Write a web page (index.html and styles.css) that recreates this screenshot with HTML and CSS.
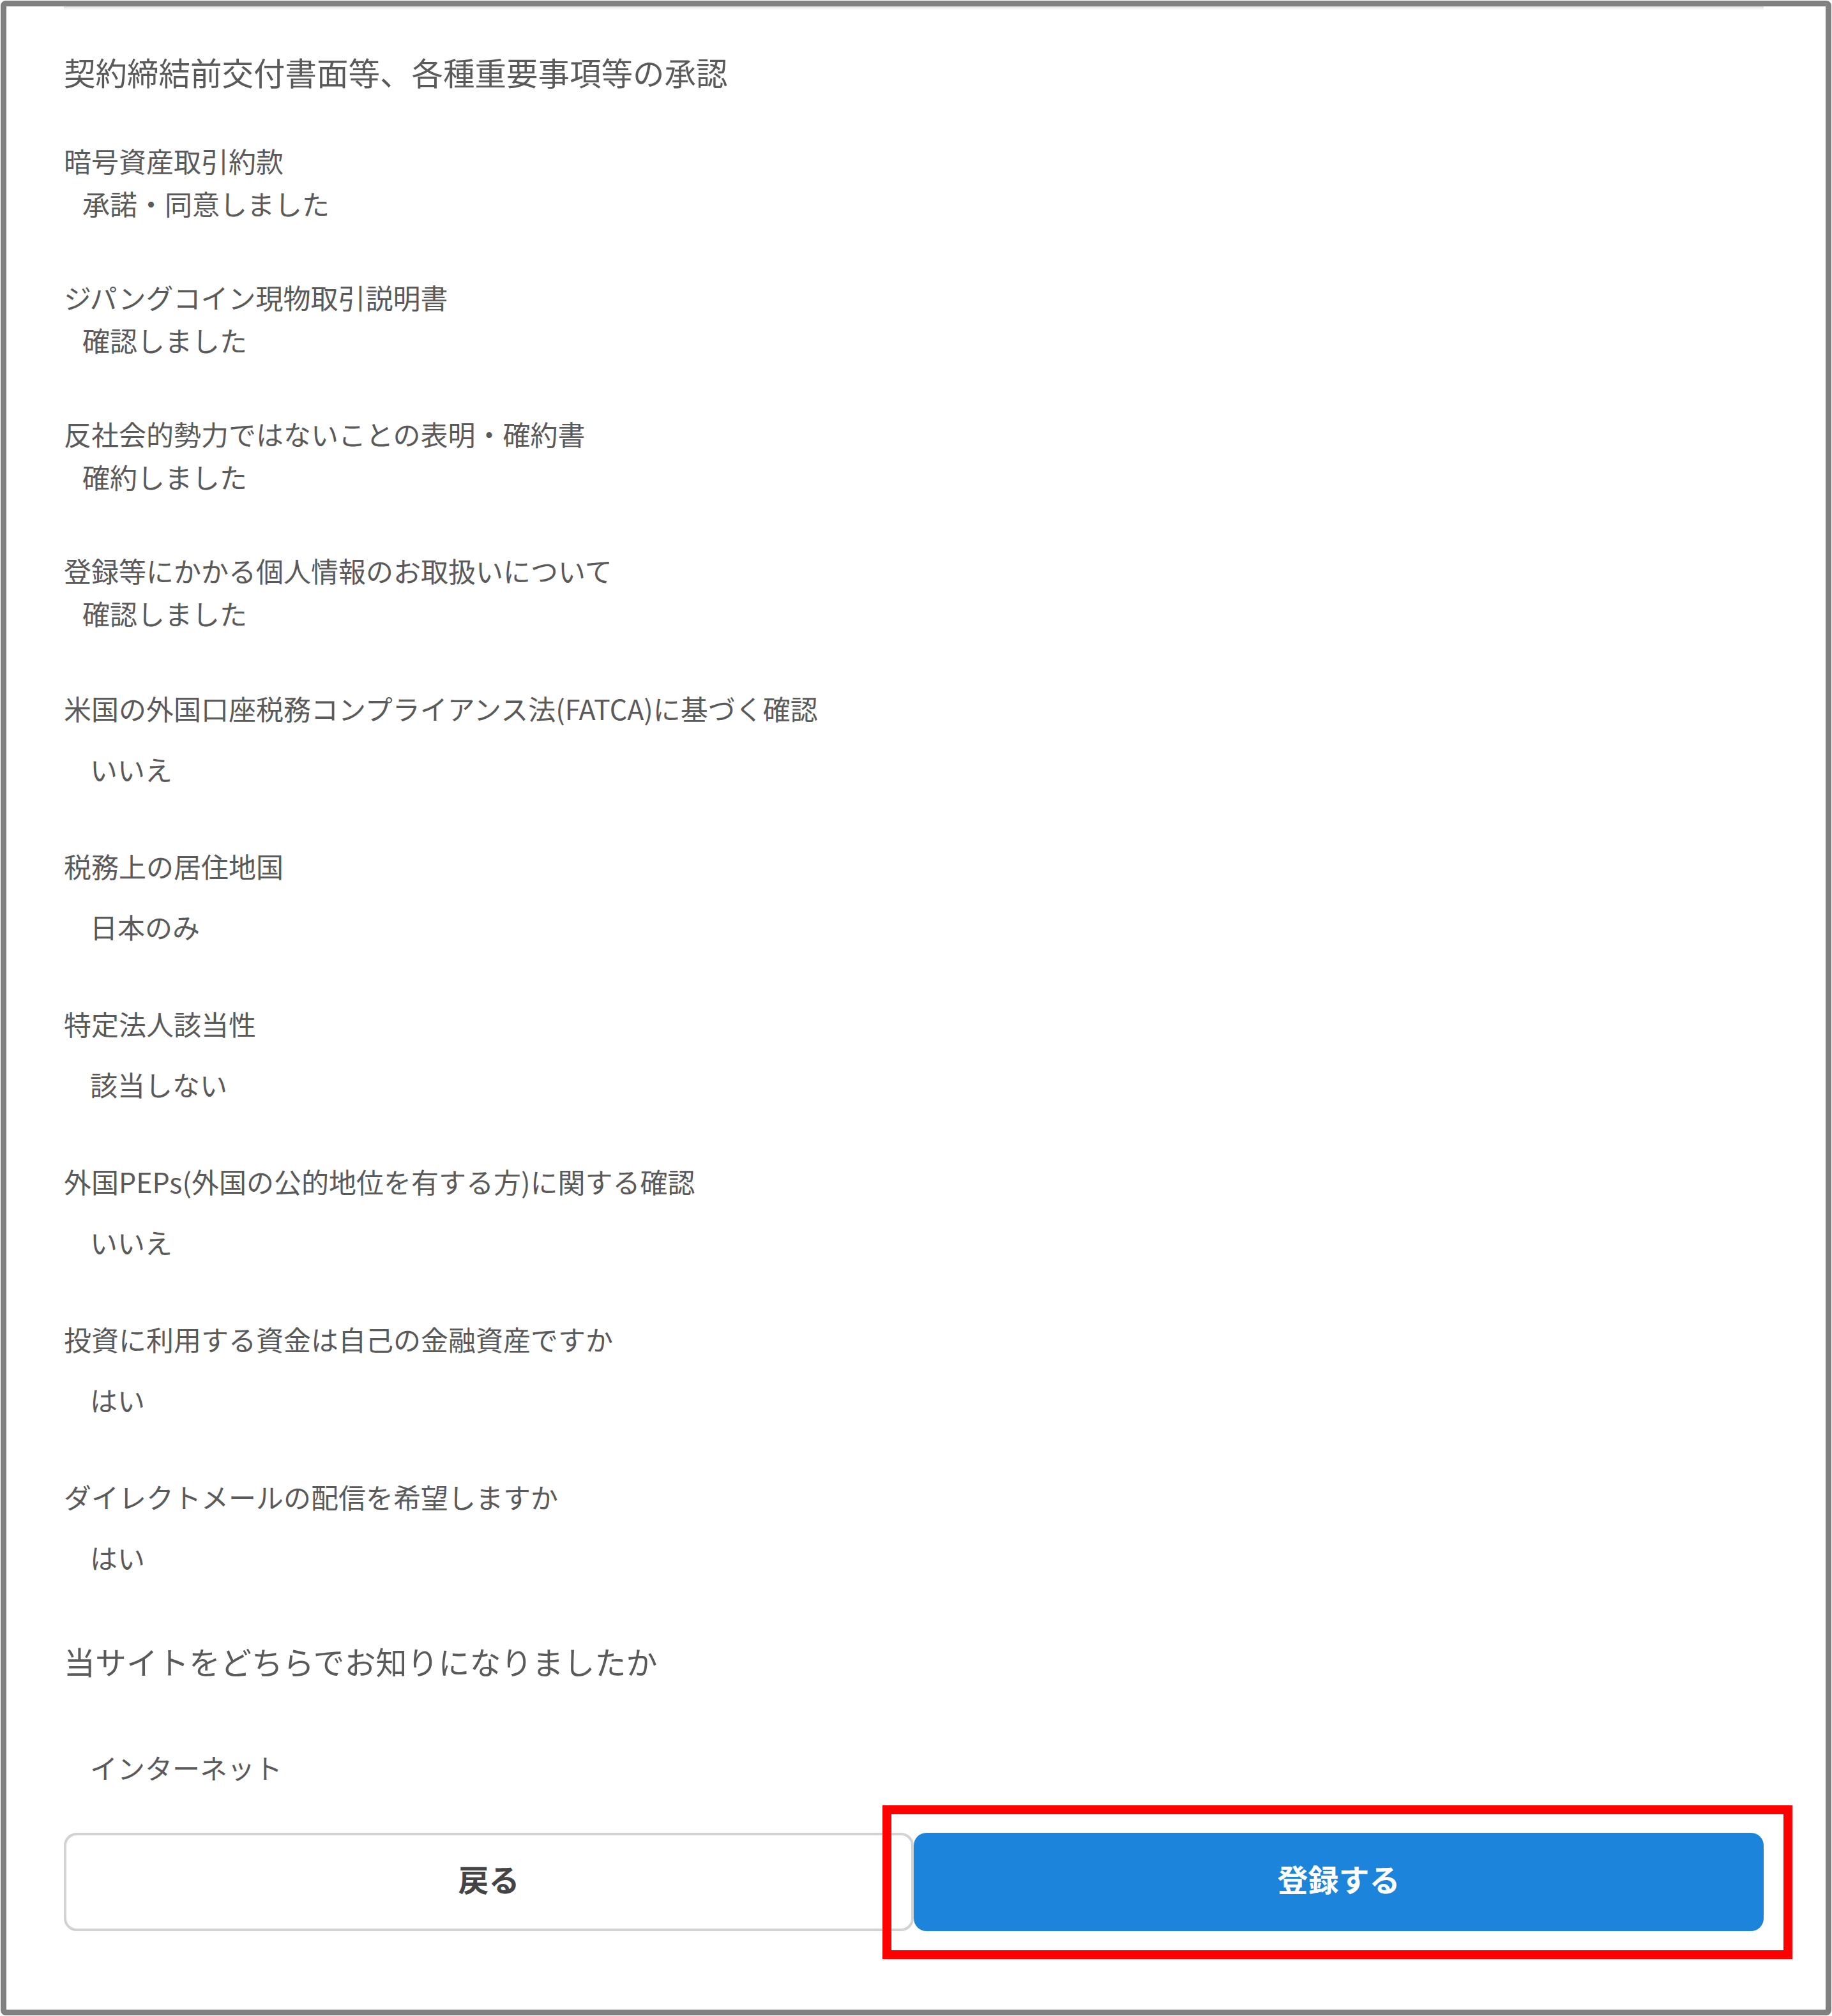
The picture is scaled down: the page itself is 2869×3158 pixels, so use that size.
FILE: index.html
```html
<!DOCTYPE html>
<html lang="ja">
<head>
<meta charset="utf-8">
<title>確認</title>
<link rel="stylesheet" href="styles.css">
</head>
<body>
<div class="frame">
  <div class="content">
    <div class="top-shadow"></div>
    <h2 class="heading">契約締結前交付書面等、各種重要事項等の承認</h2>
    <div class="list">
      <div class="item compact">
        <div class="label">暗号資産取引約款</div>
        <div class="value">承諾・同意しました</div>
      </div>
      <div class="item compact">
        <div class="label">ジパングコイン現物取引説明書</div>
        <div class="value">確認しました</div>
      </div>
      <div class="item compact">
        <div class="label">反社会的勢力ではないことの表明・確約書</div>
        <div class="value">確約しました</div>
      </div>
      <div class="item compact last-compact">
        <div class="label">登録等にかかる個人情報のお取扱いについて</div>
        <div class="value">確認しました</div>
      </div>
      <div class="item wide">
        <div class="label">米国の外国口座税務コンプライアンス法(FATCA)に基づく確認</div>
        <div class="value">いいえ</div>
      </div>
      <div class="item wide">
        <div class="label">税務上の居住地国</div>
        <div class="value">日本のみ</div>
      </div>
      <div class="item wide">
        <div class="label">特定法人該当性</div>
        <div class="value">該当しない</div>
      </div>
      <div class="item wide">
        <div class="label">外国PEPs(外国の公的地位を有する方)に関する確認</div>
        <div class="value">いいえ</div>
      </div>
      <div class="item wide">
        <div class="label">投資に利用する資金は自己の金融資産ですか</div>
        <div class="value">はい</div>
      </div>
      <div class="item wide">
        <div class="label">ダイレクトメールの配信を希望しますか</div>
        <div class="value">はい</div>
      </div>
      <div class="item source">
        <div class="label large">当サイトをどちらでお知りになりましたか</div>
        <div class="value">インターネット</div>
      </div>
    </div>
    <div class="actions">
      <button class="btn btn-back" type="button">戻る</button>
      <button class="btn btn-submit" type="button">登録する</button>
      <div class="highlight"></div>
    </div>
  </div>
</div>
</body>
</html>
```
FILE: styles.css
```css
html, body {
  margin: 0;
  padding: 0;
  background: #ffffff;
}

body {
  font-family: "Noto Sans CJK JP", "Noto Sans", sans-serif;
  color: #5a5a5a;
}

.frame {
  box-sizing: border-box;
  width: 2867px;
  height: 3156px;
  margin: 1px 0 0 1px;
  border: 9px solid #808080;
  border-radius: 8px;
  background: #ffffff;
  overflow: hidden;
}

.content {
  padding: 0 97px 0 90px;
}

.top-shadow {
  height: 6px;
  background: linear-gradient(to bottom, rgba(0, 0, 0, 0.13), rgba(0, 0, 0, 0));
}

.heading {
  margin: 62px 0 73px 0;
  font-size: 49.5px;
  line-height: 70px;
  font-weight: 400;
  color: #5a5a5a;
}

.list {
  display: flex;
  flex-direction: column;
}

.label {
  font-size: 43px;
  line-height: 60px;
  white-space: nowrap;
}

.label.large {
  font-size: 49px;
  line-height: 70px;
}

.value {
  font-size: 43px;
  line-height: 60px;
  white-space: nowrap;
}

.item.compact {
  margin-bottom: 87px;
}

.item.compact .value {
  margin-top: 7px;
  padding-left: 29px;
}

.item.last-compact {
  margin-bottom: 89px;
}

.item.wide {
  margin-bottom: 92px;
}

.item.wide .value {
  margin-top: 35px;
  padding-left: 41px;
}

.item.source {
  margin-top: 6px;
}

.item.source .value {
  margin-top: 101px;
  padding-left: 41px;
}

.actions {
  position: relative;
  display: grid;
  grid-template-columns: 1fr 1fr;
  margin-top: 73px;
}

.btn {
  box-sizing: border-box;
  height: 154px;
  padding: 0 0 12px 0;
  border-radius: 20px;
  font-family: "Noto Sans CJK JP", "Noto Sans", sans-serif;
  font-size: 48px;
  font-weight: 700;
  cursor: pointer;
}

.btn-back {
  background: #ffffff;
  border: 4px solid #d2d2d2;
  color: #444444;
}

.btn-submit {
  background: #1c84da;
  border: 0;
  color: #ffffff;
}

.highlight {
  position: absolute;
  left: 1282px;
  top: -43px;
  box-sizing: border-box;
  width: 1425px;
  height: 241px;
  border: 14px solid #ff0000;
  pointer-events: none;
}
```
